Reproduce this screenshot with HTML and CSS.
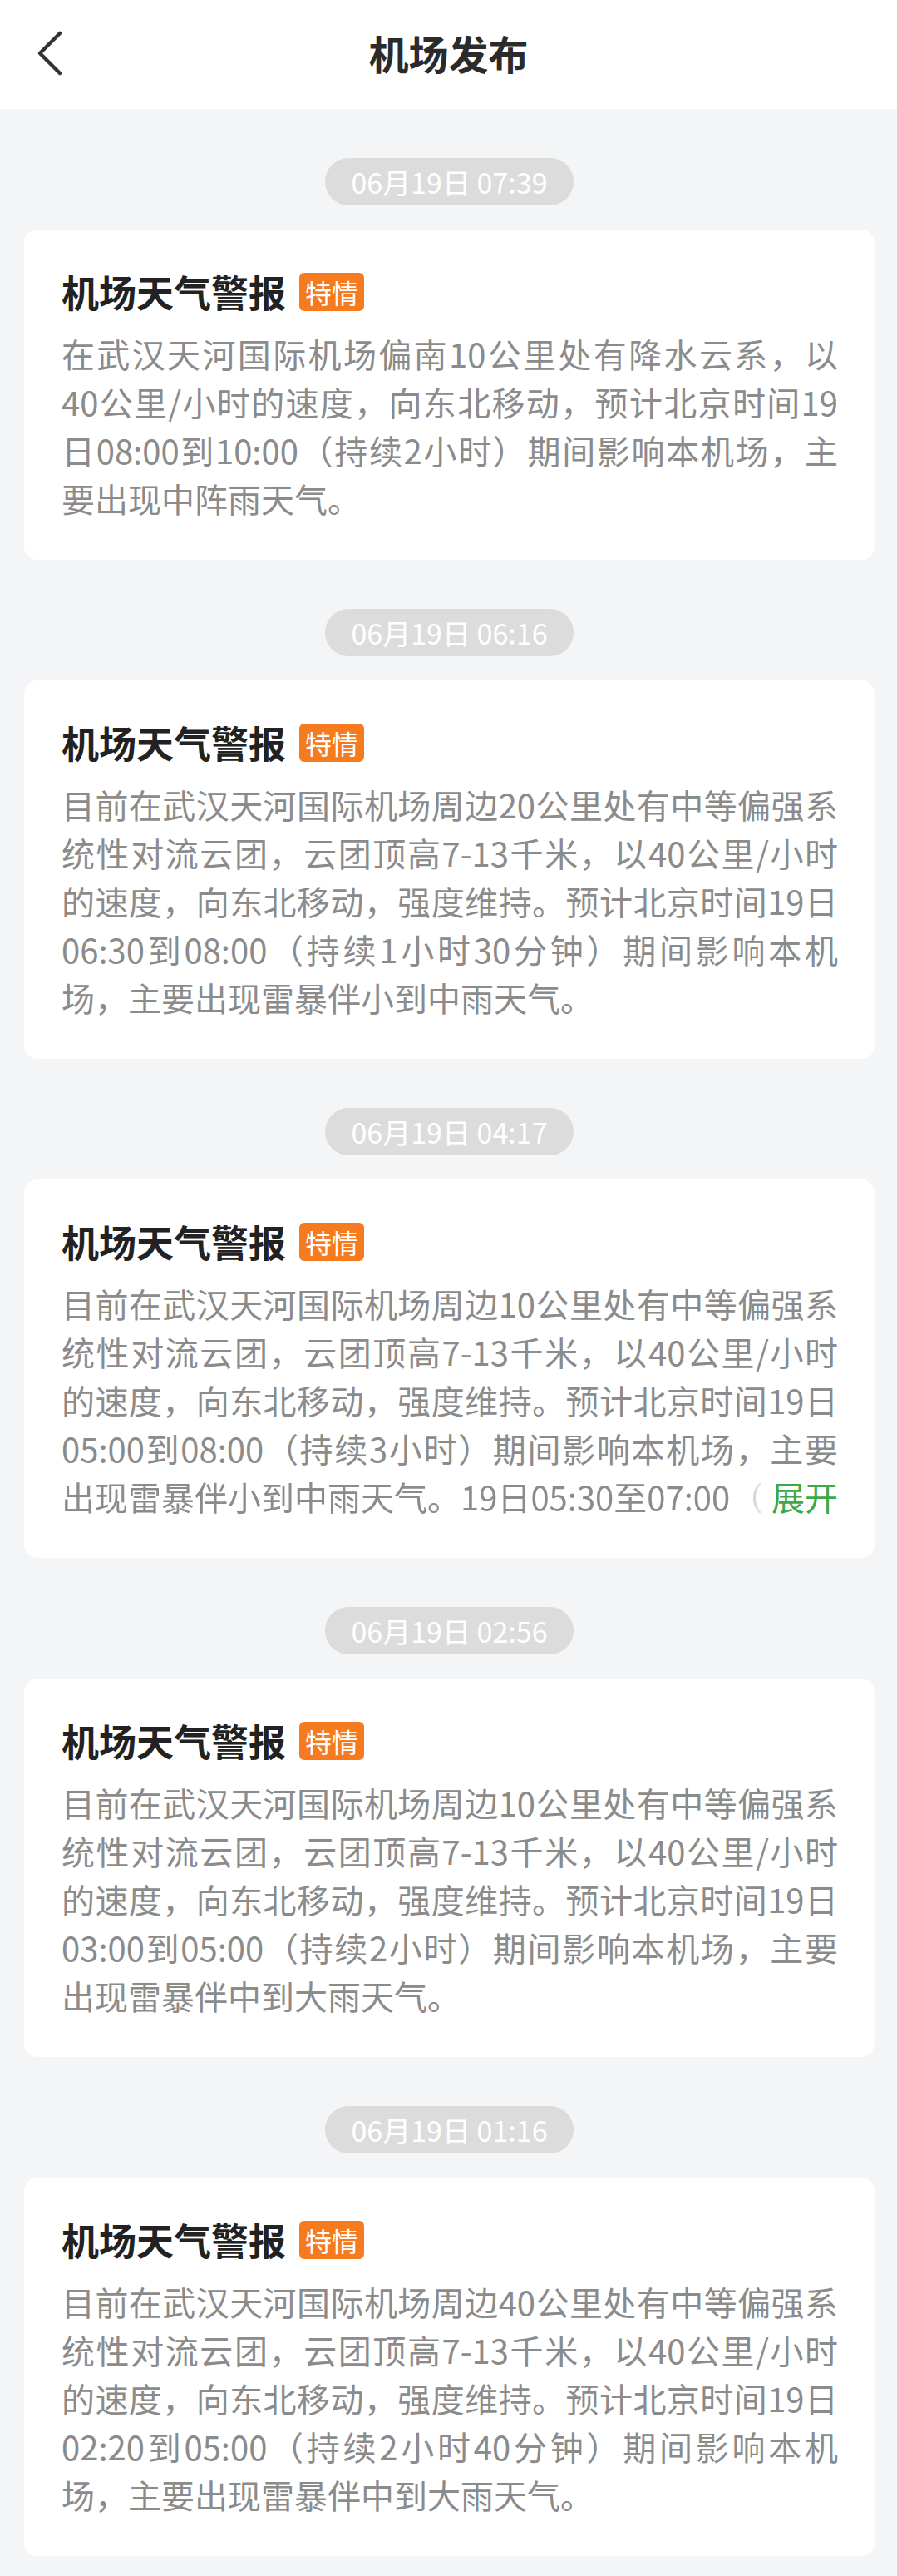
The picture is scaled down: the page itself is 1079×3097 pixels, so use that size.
FILE: index.html
```html
<!DOCTYPE html>
<html>
<head>
<meta name="viewport" content="width=device-width, initial-scale=1">
<link rel="stylesheet" href="styles.css">
</head>
<body>

<!-- ************************ header ******************************** -->
<div class="topbar">
  <span class="back">
    <svg width="40" height="60" viewBox="0 0 40 60">
      <polyline points="28,6 4,30 28,54" fill="none" stroke="#333" stroke-width="4.5" stroke-linecap="round" stroke-linejoin="round"/>
    </svg>
  </span>
  <h1 class="topbar_title">机场发布</h1>
</div>

<!-- ************************ list ******************************** -->
<!-- the lines are split the same way the app wraps them -->
<div class="list">

  <div class="time"><span>06月19日 07:39</span></div>
  <div class="card">
    <h3 class="card_title">机场天气警报<span class="tag">特情</span></h3>
    <p class="card_text">
      <span class="ln">在武汉天河国际机场偏南10公里处有降水云系，以</span>
      <span class="ln">40公里/小时的速度，向东北移动，预计北京时间19</span>
      <span class="ln">日08:00到10:00（持续2小时）期间影响本机场，主</span>
      <span>要出现中阵雨天气。</span>
    </p>
  </div>

  <div class="time"><span>06月19日 06:16</span></div>
  <div class="card">
    <h3 class="card_title">机场天气警报<span class="tag">特情</span></h3>
    <p class="card_text">
      <span class="ln">目前在武汉天河国际机场周边20公里处有中等偏强系</span>
      <span class="ln">统性对流云团，云团顶高7-13千米，以40公里/小时</span>
      <span class="ln">的速度，向东北移动，强度维持。预计北京时间19日</span>
      <span class="ln">06:30到08:00（持续1小时30分钟）期间影响本机</span>
      <span>场，主要出现雷暴伴小到中雨天气。</span>
    </p>
  </div>

  <div class="time"><span>06月19日 04:17</span></div>
  <div class="card">
    <h3 class="card_title">机场天气警报<span class="tag">特情</span></h3>
    <div class="card_text">
      <span class="ln">目前在武汉天河国际机场周边10公里处有中等偏强系</span>
      <span class="ln">统性对流云团，云团顶高7-13千米，以40公里/小时</span>
      <span class="ln">的速度，向东北移动，强度维持。预计北京时间19日</span>
      <span class="ln">05:00到08:00（持续3小时）期间影响本机场，主要</span>
      <div class="fold">
        <span class="fold_text">出现雷暴伴小到中雨天气。19日05:30至07:00（</span>
        <span class="more">展开</span>
      </div>
    </div>
  </div>

  <div class="time"><span>06月19日 02:56</span></div>
  <div class="card">
    <h3 class="card_title">机场天气警报<span class="tag">特情</span></h3>
    <p class="card_text">
      <span class="ln">目前在武汉天河国际机场周边10公里处有中等偏强系</span>
      <span class="ln">统性对流云团，云团顶高7-13千米，以40公里/小时</span>
      <span class="ln">的速度，向东北移动，强度维持。预计北京时间19日</span>
      <span class="ln">03:00到05:00（持续2小时）期间影响本机场，主要</span>
      <span>出现雷暴伴中到大雨天气。</span>
    </p>
  </div>

  <div class="time"><span>06月19日 01:16</span></div>
  <div class="card">
    <h3 class="card_title">机场天气警报<span class="tag">特情</span></h3>
    <p class="card_text">
      <span class="ln">目前在武汉天河国际机场周边40公里处有中等偏强系</span>
      <span class="ln">统性对流云团，云团顶高7-13千米，以40公里/小时</span>
      <span class="ln">的速度，向东北移动，强度维持。预计北京时间19日</span>
      <span class="ln">02:20到05:00（持续2小时40分钟）期间影响本机</span>
      <span>场，主要出现雷暴伴中到大雨天气。</span>
    </p>
  </div>

</div>

</body>
</html>
```

FILE: styles.css
```css
* {box-sizing: border-box}
body {
  margin: 0;
  background-color: #f4f5f7;
  font-family: "Noto Sans CJK SC", "Noto Sans", sans-serif;
}

/* top bar */
.topbar {
  position: relative;
  height: 131px;
  background-color: #fff;
  display: flex;
  align-items: center;
  justify-content: center;
  padding-bottom: 6px;
}

.back {
  position: absolute;
  left: 44px;
  top: 34px;
  width: 40px;
  height: 60px;
}

.topbar_title {
  margin: 0;
  font-size: 48px;
  font-weight: 700;
  color: #2b2b2b;
  line-height: 60px;
}

/* list */
.list {
  padding: 59px 27px 33px 29px;
}

.time {
  text-align: center;
  margin-bottom: 29px;
}

.time span {
  display: inline-block;
  height: 57px;
  line-height: 57px;
  padding: 0 31px;
  border-radius: 29px;
  background-color: #dcdcdc;
  color: #fff;
  font-size: 34px;
}

.card {
  background-color: #fff;
  border-radius: 16px;
  padding: 46px 44px 45px 45px;
  margin-bottom: 59px;
}

.card_title {
  margin: 0 0 16px 0;
  font-size: 45px;
  line-height: 58px;
  font-weight: 700;
  color: #222;
  display: flex;
  align-items: center;
}

.tag {
  margin-left: 16px;
  height: 46px;
  line-height: 46px;
  padding: 0 7px;
  border-radius: 6px;
  background-color: #f57b1e;
  color: #fff;
  font-size: 32px;
  font-weight: 400;
}

.card_text {
  margin: 0;
  font-size: 40px;
  line-height: 58px;
  color: #8b8b8b;
}

.card_text span {
  display: block;
}

/* every wrapped line runs to the right edge */
.card_text .ln {
  text-align: justify;
  text-align-last: justify;
}

/* last visible line of a folded text, with the expand link */
.fold {
  display: flex;
  justify-content: space-between;
}

.card_text .fold_text {
  white-space: nowrap;
  -webkit-mask-image: linear-gradient(to right, #000 calc(100% - 44px), rgba(0,0,0,0.15));
  mask-image: linear-gradient(to right, #000 calc(100% - 44px), rgba(0,0,0,0.15));
}

.card_text .more {
  color: #3da945;
}
```
